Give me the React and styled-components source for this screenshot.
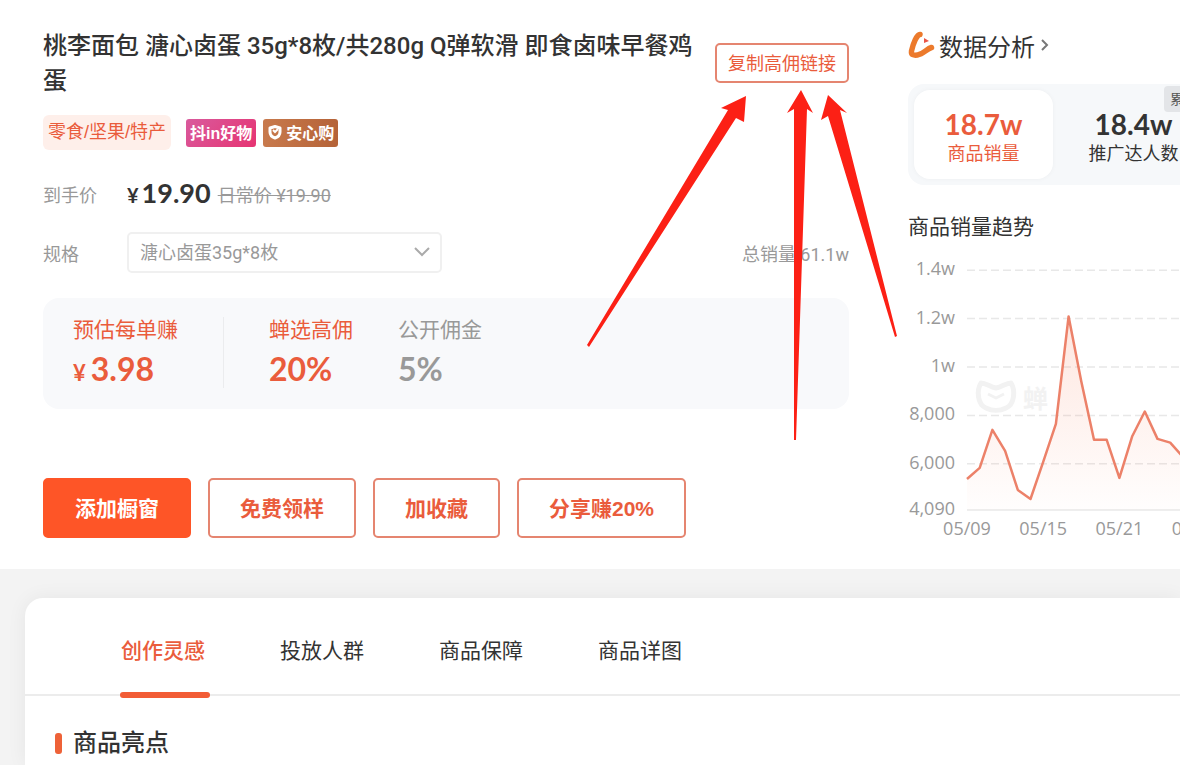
import React, { useState } from "react";
import styled, { createGlobalStyle, css } from "styled-components";

const ORANGE = "#fe5527";
const ACCENT = "#ea5c3c";
const NUMBER_FONT = `Lato, "Noto Sans CJK SC", sans-serif`;
const LABEL_FONT = `"Liberation Sans", "Noto Sans CJK SC", sans-serif`;

const GlobalStyle = createGlobalStyle`
  * {
    box-sizing: border-box;
  }
  body {
    margin: 0;
    background: #f3f3f3;
    color: #333;
    font-family: Roboto, "Noto Sans CJK SC", sans-serif;
    font-size: 18px;
  }
  button,
  select {
    font-family: inherit;
  }
  h1, h2, h3, p, dl, dd {
    margin: 0;
  }
`;

const Page = styled.div`
  position: relative;
  display: flex;
  flex-direction: column;
  min-height: 100vh;
  overflow: hidden;
`;

const Product = styled.section`
  display: flex;
  gap: 59px;
  padding: 29px 0 31px 43px;
  background: #fff;
`;

const Info = styled.div`
  flex: 0 1 806px;
  min-width: 0;
`;

const Head = styled.div`
  display: flex;
  align-items: flex-start;
  gap: 16px;
`;

const Title = styled.h1`
  flex: 1;
  font-size: 24px;
  line-height: 35px;
  font-weight: 500;
`;

const OutlineButton = styled.button`
  border: 2px solid #e58570;
  border-radius: 5px;
  background: #fff;
  color: ${ACCENT};
  cursor: pointer;
  white-space: nowrap;
`;

const CopyButton = styled(OutlineButton)`
  height: 40px;
  margin-top: 14px;
  padding: 0 11px 2px;
  font-size: 18px;
`;

const Tags = styled.div`
  display: flex;
  align-items: center;
  height: 35px;
  margin-top: 16px;
`;

const Category = styled.span`
  margin-right: 15px;
  padding: 0 5px;
  border-radius: 6px;
  background: #feefea;
  color: ${ACCENT};
  font-family: ${LABEL_FONT};
  line-height: 35px;
`;

const Badge = styled.span`
  display: flex;
  align-items: center;
  gap: 3px;
  height: 28px;
  margin-right: 7px;
  padding: 0 4px 2px;
  border-radius: 3px;
  color: #fff;
  font-family: ${LABEL_FONT};
  font-size: 16px;
  font-weight: 700;
  background: ${(props) =>
    props.$pink
      ? "linear-gradient(135deg, #d95a9d, #e63472)"
      : "linear-gradient(90deg, #c87a4d, #b56338)"};
`;

const Row = styled.div`
  display: flex;
  align-items: center;
  height: ${(props) => props.$height}px;
  margin-top: ${(props) => props.$top}px;
  color: #999;
`;

const RowLabel = styled.label`
  width: 84px;
`;

const Price = styled.strong`
  display: flex;
  align-items: baseline;
  gap: 3px;
  margin-right: 7px;
  color: #333;
  font-family: ${NUMBER_FONT};
  font-size: 27px;
  line-height: 30px;
  font-weight: 700;
  small {
    font-size: 20px;
  }
`;

const SelectBox = styled.div`
  position: relative;
  width: 315px;
  svg {
    position: absolute;
    right: 12px;
    top: 14px;
    pointer-events: none;
  }
`;

const Select = styled.select`
  appearance: none;
  display: block;
  width: 100%;
  height: 41px;
  padding: 0 36px 0 11px;
  border: 2px solid #f0f0f0;
  border-radius: 5px;
  background: #fff;
  color: #999;
  font-size: 18px;
`;

const Total = styled.span`
  margin-left: auto;
`;

const Commission = styled.dl`
  display: flex;
  height: 111px;
  margin-top: 25px;
  padding: 19px 30px 21px;
  border-radius: 16px;
  background: #f8f9fb;
`;

const Rate = styled.div`
  margin-right: 45px;
  color: ${(props) => (props.$muted ? "#999" : ACCENT)};
  dt {
    font-size: 21px;
    line-height: 26px;
  }
  dd {
    margin-top: 6px;
    font-family: ${NUMBER_FONT};
    font-size: 32px;
    line-height: 40px;
    font-weight: 700;
  }
  dd small {
    margin-right: 5px;
    font-size: 22px;
  }
`;

const Divider = styled.div`
  width: 1px;
  margin-right: 45px;
  background: #ebecee;
`;

const Actions = styled.div`
  display: flex;
  gap: 17px;
  margin-top: 69px;
`;

const ActionButton = styled(OutlineButton)`
  height: 60px;
  padding: 0 30px 2px;
  font-family: ${LABEL_FONT};
  font-size: 21px;
  font-weight: 700;
  ${(props) =>
    props.$primary &&
    css`
      border-color: ${ORANGE};
      background: ${ORANGE};
      color: #fff;
    `}
`;

const Analysis = styled.aside`
  flex: 1 0 0;
  min-width: 0;
`;

const AnalysisLink = styled.a`
  display: flex;
  align-items: center;
  gap: 3px;
  height: 32px;
  color: #333;
  font-size: 24px;
  text-decoration: none;
  white-space: nowrap;
`;

const Stats = styled.div`
  display: flex;
  gap: 11px;
  height: 101px;
  margin-top: 23px;
  padding: 6px;
  border-radius: 16px 0 0 16px;
  background: #f6f8fa;
`;

const Stat = styled.button`
  position: relative;
  flex: 0 0 139px;
  padding: 4px 0 0;
  border: 0;
  border-radius: 16px;
  background: ${(props) => (props.$active ? "#fff" : "none")};
  box-shadow: ${(props) =>
    props.$active ? "0 0 5px rgba(0, 0, 0, 0.04)" : "none"};
  color: ${(props) => (props.$active ? ACCENT : "#333")};
  font-size: 18px;
  line-height: 26px;
  strong {
    display: block;
    font-family: ${NUMBER_FONT};
    font-size: 28px;
    line-height: 34px;
    font-weight: 700;
  }
`;

const Corner = styled.span`
  position: absolute;
  top: -4px;
  left: 100px;
  padding: 0 6px;
  border-radius: 4px;
  background: #e3e5e8;
  color: #555;
  font-size: 14px;
  line-height: 26px;
  white-space: nowrap;
`;

const ChartTitle = styled.h3`
  margin-top: 27px;
  font-size: 21px;
  line-height: 30px;
  font-weight: 400;
  white-space: nowrap;
`;

const ChartSvg = styled.svg`
  display: block;
  margin-top: 8px;
  overflow: visible;
  text {
    fill: #999;
    font-family: "Open Sans", "Noto Sans CJK SC", sans-serif;
    font-size: 18px;
  }
`;

const Detail = styled.section`
  flex: 1;
  margin: 29px 0 0 25px;
  border-radius: 18px 0 0 0;
  background: #fff;
  box-shadow: 0 0 20px rgba(0, 0, 0, 0.06);
`;

const Tabs = styled.nav`
  display: flex;
  gap: 69px;
  height: 98px;
  padding-left: 95px;
  border-bottom: 2px solid #ececec;
`;

const Tab = styled.button`
  position: relative;
  width: 90px;
  padding: 0 4px 0 0;
  border: 0;
  background: none;
  color: ${(props) => (props.$active ? ACCENT : "#333")};
  font-size: 21px;
  font-weight: ${(props) => (props.$active ? 500 : 400)};
  line-height: 30px;
  padding-top: 10px;
  cursor: pointer;
  &::after {
    content: "";
    position: absolute;
    left: 0;
    right: 0;
    bottom: -4px;
    height: 6px;
    border-radius: 3px;
    background: ${(props) => (props.$active ? "#f25c35" : "none")};
  }
`;

const SectionTitle = styled.h2`
  display: flex;
  align-items: center;
  gap: 11px;
  padding: 30px 30px 0;
  font-size: 24px;
  line-height: 34px;
  font-weight: 500;
  &::before {
    content: "";
    width: 7px;
    height: 21px;
    border-radius: 3px;
    background: #ee6238;
  }
`;

const Arrows = styled.svg`
  position: absolute;
  top: 0;
  left: 0;
  pointer-events: none;
`;

const TICKS = [
  { label: "1.4w", value: 14000 },
  { label: "1.2w", value: 12000 },
  { label: "1w", value: 10000 },
  { label: "8,000", value: 8000 },
  { label: "6,000", value: 6000 },
  { label: "4,090", value: 4090 },
];
const DATES = ["05/09", "05/15", "05/21", "05/27"];
const SALES = [
  5370, 5830, 7400, 6530, 4920, 4545, 6080, 7650, 12090, 9400, 6990, 6990, 5415,
  7125, 8160, 7030, 6875, 6280, 6100,
];
const TABS = ["创作灵感", "投放人群", "商品保障", "商品详图"];

const STEP = 12.7;
const LEFT = 59;
const BASE = 260;
const getX = (i) => LEFT + i * STEP;
const getY = (value) => BASE - (value - 4090) * 0.0242;

function Chart() {
  const line = SALES.map((v, i) => `${getX(i)},${getY(v)}`).join(" ");
  const end = getX(SALES.length - 1);
  return (
    <ChartSvg width="288" height="288" role="img" aria-label="商品销量趋势">
      <defs>
        <linearGradient id="area" x1="0" y1="0" x2="0" y2="1">
          <stop offset="0" stopColor="#f9764f" stopOpacity="0.18" />
          <stop offset="1" stopColor="#f9764f" stopOpacity="0.01" />
        </linearGradient>
      </defs>
      {TICKS.map((tick, i) => (
        <g key={tick.label}>
          <line
            x1={LEFT}
            x2="288"
            y1={getY(tick.value)}
            y2={getY(tick.value)}
            stroke="#e8e8e8"
            strokeWidth="1.5"
            strokeDasharray={i === TICKS.length - 1 ? "none" : "8 4"}
          />
          <text x="47" y={getY(tick.value) + 5} textAnchor="end">
            {tick.label}
          </text>
        </g>
      ))}
      <g stroke="#f2f2f2" strokeWidth="5" fill="none" strokeLinejoin="round">
        <path d="M73 133c-5 8-3 22 5 25 6 3 14 3 20 0 8-3 10-17 5-25-5 0-9 4-15 5-6-1-10-5-15-5z" />
        <path d="M80 144l8 4 8-4" strokeWidth="3" />
      </g>
      <text x="115" y="158" style={{ fill: "#f2f2f2", fontSize: 25, fontWeight: 700 }}>
        蝉
      </text>
      <polygon
        points={`${LEFT},${BASE} ${line} ${end},${BASE}`}
        fill="url(#area)"
      />
      <polyline
        points={line}
        fill="none"
        stroke="#ec8169"
        strokeWidth="2.5"
        strokeLinejoin="round"
      />
      {DATES.map((date, i) => (
        <text key={date} x={getX(i * 6)} y="285" textAnchor="middle">
          {date}
        </text>
      ))}
    </ChartSvg>
  );
}

function Logo() {
  return (
    <svg width="28" height="30" viewBox="0 0 28 30" fill="none">
      <path
        d="M12 4.500C9 4 5 14 3.500 21c-.5 4 2 4.500 6 4 6-.8 9-6 14-7.500"
        stroke="#ec7a2c"
        strokeWidth="5.500"
        strokeLinecap="round"
        strokeLinejoin="round"
      />
      <path d="M16 8l5 3-5 2z" fill="#ea5648" />
    </svg>
  );
}

export default function App() {
  const [activeTab, setActiveTab] = useState(TABS[0]);

  return (
    <Page>
      <GlobalStyle />
      <Product>
        <Info>
          <Head>
            <Title>
              桃李面包 溏心卤蛋 35g*8枚/共280g Q弹软滑 即食卤味早餐鸡蛋
            </Title>
            <CopyButton type="button">复制高佣链接</CopyButton>
          </Head>
          <Tags>
            <Category>零食/坚果/特产</Category>
            <Badge $pink>抖in好物</Badge>
            <Badge>
              <svg width="16" height="16" viewBox="0 0 16 16" fill="none">
                <path
                  d="M8 2.500L13 4v4c0 3-2 5-5 6-3-1-5-3-5-6V4z"
                  stroke="#fff"
                  strokeWidth="3"
                  strokeLinejoin="round"
                />
                <path d="M6 6l2 2 3-3" stroke="#fff" strokeWidth="2" />
              </svg>
              安心购
            </Badge>
          </Tags>
          <Row $height={36} $top={26}>
            <RowLabel as="span">到手价</RowLabel>
            <Price>
              <small>¥</small>19.90
            </Price>
            <s>日常价 ¥19.90</s>
          </Row>
          <Row $height={41} $top={20}>
            <RowLabel htmlFor="spec">规格</RowLabel>
            <SelectBox>
              <Select id="spec">
                <option>溏心卤蛋35g*8枚</option>
              </Select>
              <svg width="16" height="12" viewBox="0 0 16 12" fill="none">
                <path d="M1 2l7 7 7-7" stroke="#aaa" strokeWidth="2" />
              </svg>
            </SelectBox>
            <Total>总销量 61.1w</Total>
          </Row>
          <Commission>
            <Rate>
              <dt>预估每单赚</dt>
              <dd>
                <small>¥</small>3.98
              </dd>
            </Rate>
            <Divider />
            <Rate>
              <dt>蝉选高佣</dt>
              <dd>20%</dd>
            </Rate>
            <Rate $muted>
              <dt>公开佣金</dt>
              <dd>5%</dd>
            </Rate>
          </Commission>
          <Actions>
            <ActionButton type="button" $primary>
              添加橱窗
            </ActionButton>
            <ActionButton type="button">免费领样</ActionButton>
            <ActionButton type="button">加收藏</ActionButton>
            <ActionButton type="button">分享赚20%</ActionButton>
          </Actions>
        </Info>
        <Analysis>
          <AnalysisLink href="#analysis">
            <Logo />
            数据分析
            <svg width="14" height="16" viewBox="0 0 14 16" fill="none">
              <path d="M4 3l5 5-5 5" stroke="#777" strokeWidth="2" />
            </svg>
          </AnalysisLink>
          <Stats>
            <Stat type="button" $active>
              <strong>18.7w</strong>
              商品销量
            </Stat>
            <Stat type="button">
              <strong>18.4w</strong>
              推广达人数
              <Corner>累计</Corner>
            </Stat>
          </Stats>
          <ChartTitle>商品销量趋势</ChartTitle>
          <Chart />
        </Analysis>
      </Product>
      <Detail>
        <Tabs>
          {TABS.map((tab) => (
            <Tab
              key={tab}
              type="button"
              $active={tab === activeTab}
              onClick={() => setActiveTab(tab)}
            >
              {tab}
            </Tab>
          ))}
        </Tabs>
        <SectionTitle>商品亮点</SectionTitle>
      </Detail>
      <Arrows width="900" height="450" fill="#fc2015">
        <path d="M746 96L721 108L728 110L587 345L589 347L736 118L744 122Z" />
        <path d="M801 90L787 113L794 109L794 440L796 440L807 109L813 113Z" />
        <path d="M828 95L821 120L828 116L895 337L897 336L840 110L847 113Z" />
      </Arrows>
    </Page>
  );
}
